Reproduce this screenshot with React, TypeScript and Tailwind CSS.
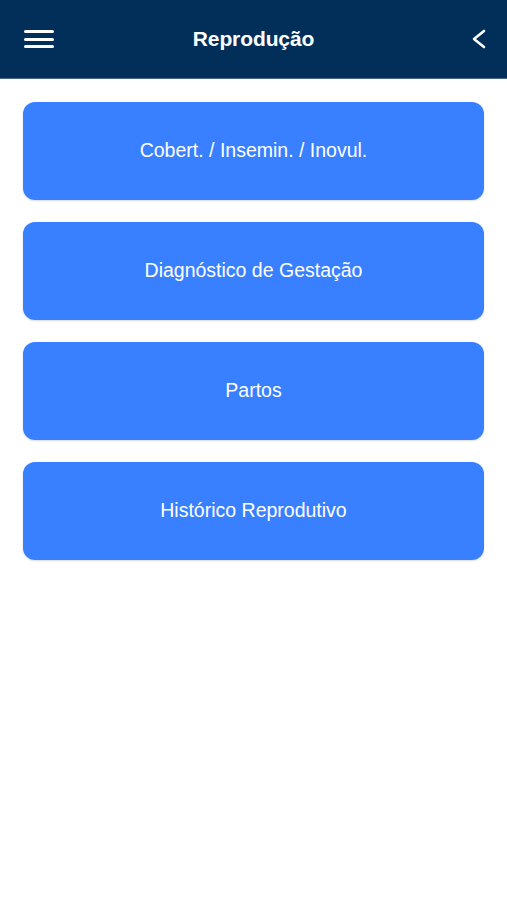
const items = [
  'Cobert. / Insemin. / Inovul.',
  'Diagnóstico de Gestação',
  'Partos',
  'Histórico Reprodutivo',
];

export default function App() {
  return (
    <div className="min-h-[900px] bg-white font-['Liberation_Sans',Arial,sans-serif]">
      {/* Header */}
      <header className="flex h-[79px] items-center border-b border-[#4a6a8c] bg-[#022f5a] px-[16px] text-white">
        <div className="flex w-[60px] items-center pl-[8px]">
          <button className="flex h-[20px] w-[30px] flex-col justify-between py-[1px]">
            <span className="h-[3px] w-full rounded-full bg-white" />
            <span className="h-[3px] w-full rounded-full bg-white" />
            <span className="h-[3px] w-full rounded-full bg-white" />
          </button>
        </div>
        <h1 className="flex-1 text-center text-[21px] font-bold tracking-[-0.1px]">Reprodução</h1>
        <div className="flex w-[60px] items-center justify-end pr-[5px]">
          <svg width="14" height="20" viewBox="0 0 14 20" fill="none">
            <polyline
              points="12,2 2,10 12,18"
              stroke="white"
              strokeWidth="2.6"
              strokeLinecap="round"
              strokeLinejoin="round"
            />
          </svg>
        </div>
      </header>

      {/* Menu */}
      <div className="flex flex-col gap-[22px] px-[23px] pt-[23px]">
        {items.map((item) => (
          <button
            key={item}
            className="flex h-[98px] w-full items-center justify-center rounded-[12px] bg-[#3880ff] text-[19.5px] text-white shadow-[0_1px_2px_rgba(0,0,0,0.15)]"
          >
            {item}
          </button>
        ))}
      </div>
    </div>
  );
}
